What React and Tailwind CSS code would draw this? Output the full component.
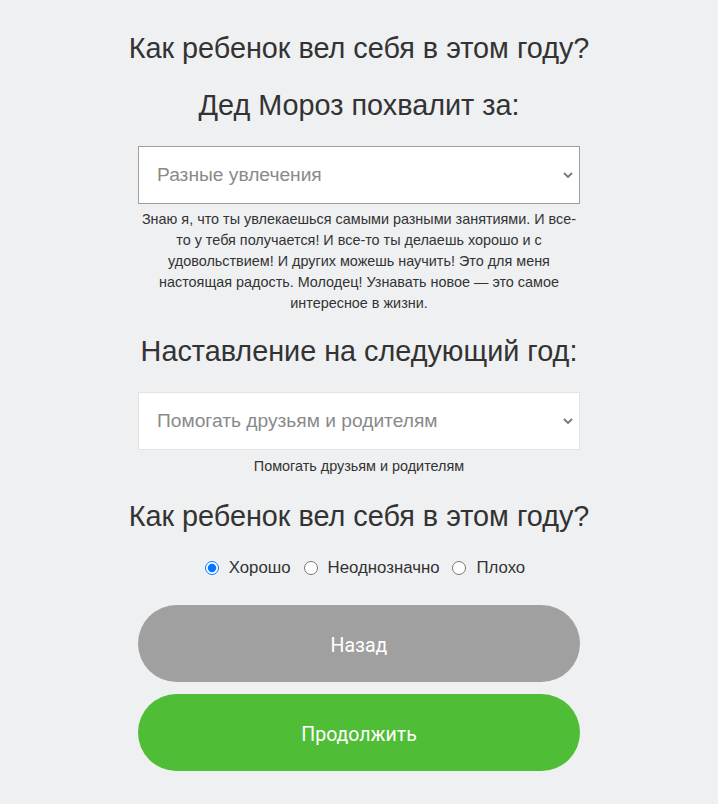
const Chevron = () => (
    <svg className="w-[10px] h-[6px]" viewBox="0 0 10 6" fill="none">
        <path d="M1 1L5 5L9 1" stroke="#777" strokeWidth="1.8"/>
    </svg>
);

const App = () => {
    return (
        <div className="min-h-screen w-full bg-[#eff0f2] text-[#333] font-['Liberation_Sans',Arial,sans-serif] flex justify-center">
            <div className="w-[442px] flex flex-col items-center pt-[28px] pb-[33px]">
                <h1 className="text-[28.8px] leading-[40px] whitespace-nowrap">Как ребенок вел себя в этом году?</h1>
                <h2 className="text-[28.8px] leading-[40px] mt-[17px]">Дед Мороз похвалит за:</h2>

                <div className="mt-[21px] w-full h-[58px] bg-white border border-[#a0a0a0] flex items-center justify-between pl-[18px] pr-[6px]">
                    <span className="text-[19.2px] text-[#8a8a8a]">Разные увлечения</span>
                    <Chevron/>
                </div>
                <p className="mt-[5px] text-[14.4px] leading-[21px] text-center">
                    Знаю я, что ты увлекаешься самыми разными занятиями. И все-то у тебя получается! И все-то ты делаешь хорошо и с удовольствием! И других можешь научить! Это для меня настоящая радость. Молодец! Узнавать новое — это самое интересное в жизни.
                </p>

                <h2 className="text-[28.8px] leading-[40px] mt-[17px]">Наставление на следующий год:</h2>

                <div className="mt-[21px] w-full h-[58px] bg-white border border-[#e3e3e3] flex items-center justify-between pl-[18px] pr-[6px]">
                    <span className="text-[19.2px] text-[#8a8a8a]">Помогать друзьям и родителям</span>
                    <Chevron/>
                </div>
                <p className="mt-[6px] text-[14.4px] leading-[20px] text-center">Помогать друзьям и родителям</p>

                <h2 className="text-[28.8px] leading-[40px] mt-[20px] whitespace-nowrap">Как ребенок вел себя в этом году?</h2>

                <div className="mt-[22px] ml-[12px] h-[20px] flex items-center text-[16.8px]">
                    <label className="flex items-center gap-[10px] mr-[13px]">
                        <input type="radio" name="mood" defaultChecked className="w-[14px] h-[14px] m-0 accent-[#0075ff]"/>
                        Хорошо
                    </label>
                    <label className="flex items-center gap-[10px] mr-[13px]">
                        <input type="radio" name="mood" className="w-[14px] h-[14px] m-0"/>
                        Неоднозначно
                    </label>
                    <label className="flex items-center gap-[10px]">
                        <input type="radio" name="mood" className="w-[14px] h-[14px] m-0"/>
                        Плохо
                    </label>
                </div>

                <button className="mt-[27px] w-full h-[77px] pt-[5px] rounded-full bg-[#a0a0a0] text-white text-[19.5px] font-['Roboto',sans-serif]">
                    Назад
                </button>
                <button className="mt-[12px] w-full h-[77px] pt-[5px] rounded-full bg-[#4fbd35] text-white text-[19.5px] font-['Roboto',sans-serif]">
                    Продолжить
                </button>
            </div>
        </div>
    );
};

export default App;
